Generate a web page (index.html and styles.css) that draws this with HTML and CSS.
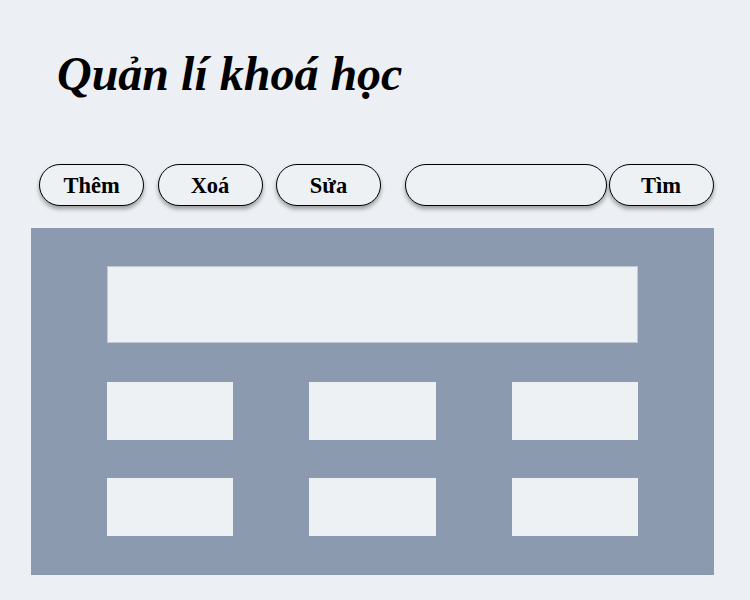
FILE: index.html
```html
<!DOCTYPE html>
<html lang="vi">
<head>
<meta charset="utf-8">
<link rel="stylesheet" href="styles.css">
</head>
<body>
<h1 class="title">Quản lí khoá học</h1>
<div class="toolbar">
  <button class="btn">Thêm</button>
  <button class="btn">Xoá</button>
  <button class="btn">Sửa</button>
  <input class="search" type="text">
  <button class="btn btn-find">Tìm</button>
</div>
<div class="panel">
  <div class="box box-wide"></div>
  <div class="grid">
    <div class="box"></div>
    <div class="box"></div>
    <div class="box"></div>
    <div class="box"></div>
    <div class="box"></div>
    <div class="box"></div>
  </div>
</div>
</body>
</html>
```
FILE: styles.css
```css
html, body {
  margin: 0;
  padding: 0;
  background: #eceff3;
  font-family: "Liberation Serif", "Times New Roman", serif;
}
.title {
  margin: 0;
  padding: 44px 0 0 57px;
  height: 118px;
  box-sizing: border-box;
  font-size: 48px;
  font-weight: bold;
  font-style: italic;
  line-height: 60px;
  color: #000;
}
.toolbar {
  display: flex;
  align-items: center;
  padding: 46px 0 0 39px;
  height: 88px;
  box-sizing: border-box;
}
.btn {
  width: 105px;
  height: 42px;
  margin-right: 13.5px;
  border: 1px solid #000;
  border-radius: 21px;
  background: #eef1f4;
  box-shadow: 0 3px 4px rgba(0,0,0,0.35);
  font-family: "Liberation Serif", "Times New Roman", serif;
  font-weight: bold;
  font-size: 22.5px;
  color: #000;
  padding: 1px 0 0;
}
.search {
  width: 202px;
  height: 42px;
  box-sizing: border-box;
  margin-left: 10px;
  border: 1px solid #000;
  border-radius: 21px;
  background: #eef1f4;
  box-shadow: 0 3px 4px rgba(0,0,0,0.35);
  padding: 0 14px;
}
.btn-find {
  margin-left: 2px;
  margin-right: 0;
}
.panel {
  margin: 22px 0 0 31px;
  width: 683px;
  height: 347px;
  box-sizing: border-box;
  background: #8c9ab0;
  padding: 38px 76px;
}
.box {
  background: #edf1f4;
  height: 58px;
}
.box-wide {
  height: 77px;
  border: 1px solid #c3c9d2;
  box-sizing: border-box;
}
.grid {
  margin-top: 39px;
  display: grid;
  grid-template-columns: 126px 127px 126px;
  justify-content: space-between;
  row-gap: 38px;
}
```
